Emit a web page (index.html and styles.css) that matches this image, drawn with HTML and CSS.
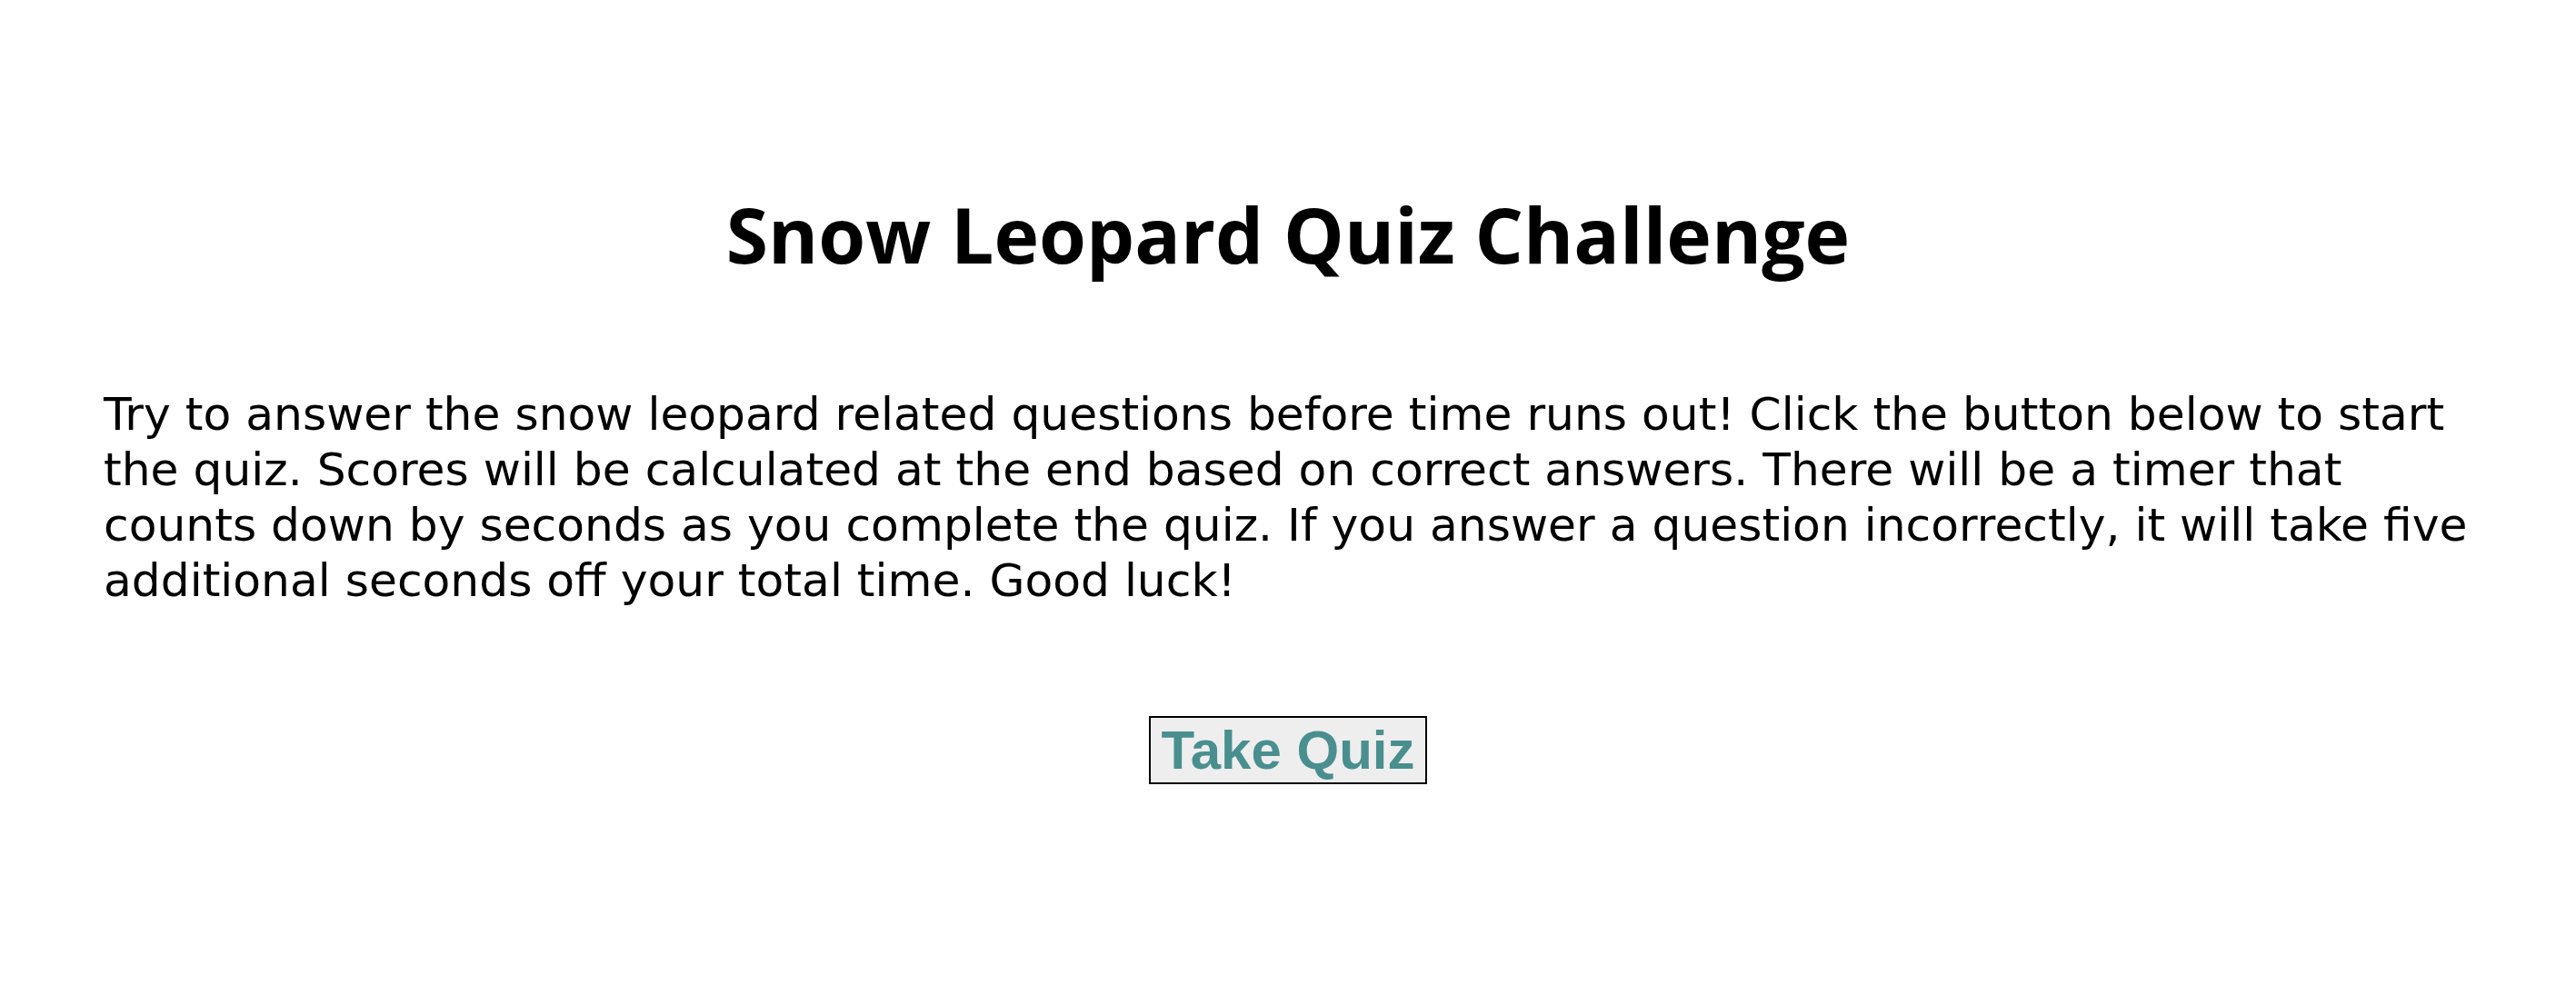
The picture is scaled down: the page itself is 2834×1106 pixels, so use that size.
FILE: index.html
```html
<!DOCTYPE html>
<html>
<head>
<meta charset="utf-8">
<link rel="stylesheet" href="styles.css">
</head>
<body>
<main class="intro">
  <h1 class="title">Snow Leopard Quiz Challenge</h1>
  <p class="rules">Try to answer the snow leopard related questions before time runs out! Click the button below to start the quiz. Scores will be calculated at the end based on correct answers. There will be a timer that counts down by seconds as you complete the quiz. If you answer a question incorrectly, it will take five additional seconds off your total time. Good luck!</p>
  <div class="actions">
    <button class="start-btn" type="button">Take Quiz</button>
  </div>
</main>
</body>
</html>
```
FILE: styles.css
```css
html, body {
  margin: 0;
  padding: 0;
  background: #ffffff;
}
body {
  font-family: "DejaVu Sans", Verdana, sans-serif;
  color: #000;
}
.intro {
  padding: 200px 114px 0 114px;
}
.title {
  margin: 0;
  text-align: center;
  font-family: "Open Sans", "DejaVu Sans", sans-serif;
  font-size: 84px;
  font-weight: bold;
}
.rules {
  margin: 110px 0 0 0;
  font-size: 50.3px;
  line-height: 61px;
}
.actions {
  display: flex;
  justify-content: center;
  margin-top: 119px;
}
.start-btn {
  font-family: "Liberation Sans", Arial, sans-serif;
  font-weight: bold;
  font-size: 60px;
  color: #4a8f8f;
  background: #eeeeee;
  border: 2px solid #000;
  padding: 1px 12px;
  margin: 0;
}
```
